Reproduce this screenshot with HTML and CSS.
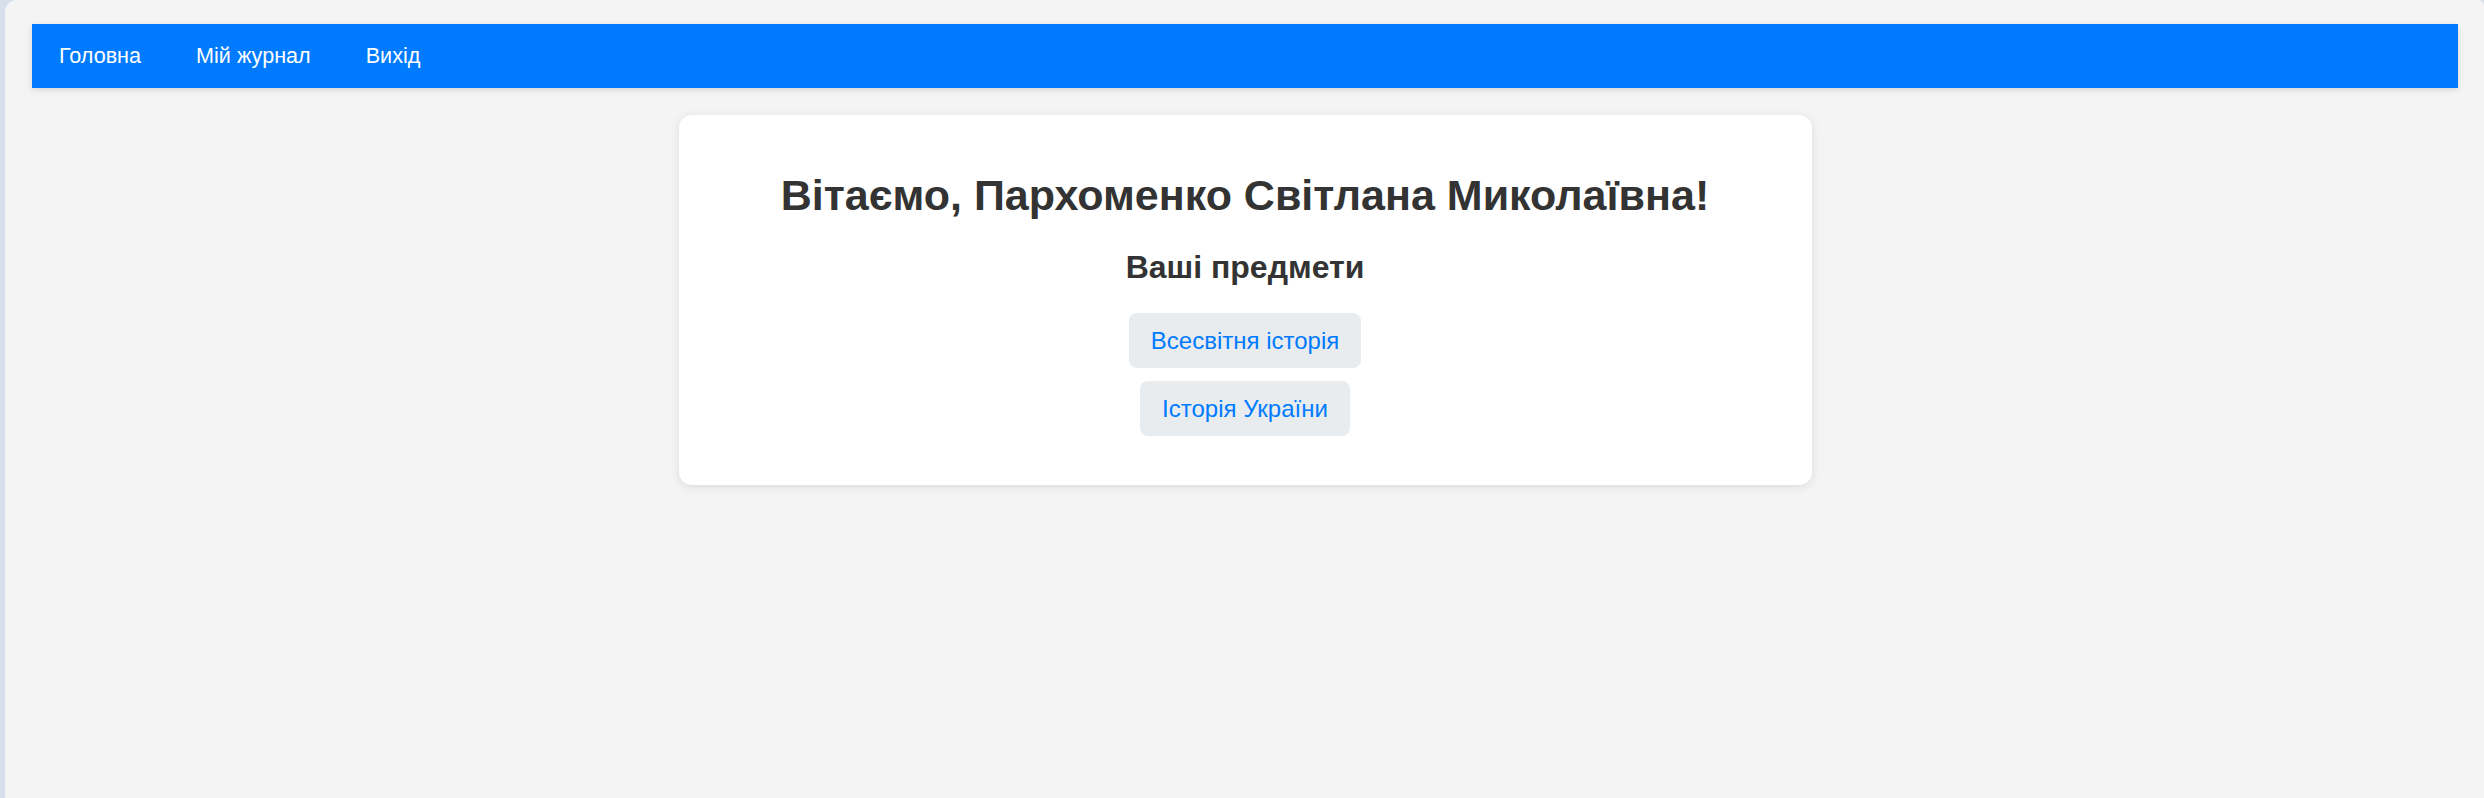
FILE: index.html
```html
<!DOCTYPE html>
<html lang="uk">
<head>
<meta charset="utf-8">
<title>Журнал</title>
<link rel="stylesheet" href="styles.css">
</head>
<body>
<div class="frame">
  <nav class="navbar">
    <a href="#" class="nav-link">Головна</a>
    <a href="#" class="nav-link">Мій журнал</a>
    <a href="#" class="nav-link">Вихід</a>
  </nav>
  <main class="card">
    <h1 class="title">Вітаємо, Пархоменко Світлана Миколаївна!</h1>
    <h2 class="subtitle">Ваші предмети</h2>
    <div class="subjects">
      <a href="#" class="subject-btn">Всесвітня історія</a>
      <a href="#" class="subject-btn">Історія України</a>
    </div>
  </main>
</div>
</body>
</html>
```

FILE: styles.css
```css
html, body {
  margin: 0;
  padding: 0;
  height: 100%;
}
body {
  background: #d5e0ea;
  font-family: "Liberation Sans", Arial, sans-serif;
  overflow: hidden;
}
.frame {
  margin-left: 5px;
  min-height: 798px;
  background: #f4f4f4;
  border-top-left-radius: 12px;
  border-top-right-radius: 6px;
  padding: 24px 26px 0 27px;
  box-sizing: border-box;
  display: flex;
  flex-direction: column;
  align-items: center;
}
.navbar {
  align-self: stretch;
  height: 64px;
  background: #007bff;
  display: flex;
  align-items: center;
  padding: 0 27px;
  gap: 55px;
  box-shadow: 0 2px 6px rgba(0, 0, 0, 0.12);
}
.nav-link {
  color: #ffffff;
  text-decoration: none;
  font-size: 21.6px;
  line-height: 26px;
}
.card {
  margin-top: 27px;
  width: 1133px;
  box-sizing: border-box;
  background: #ffffff;
  border-radius: 13px;
  box-shadow: 0 2px 10px rgba(0, 0, 0, 0.1);
  padding: 56px 20px 49px;
  text-align: center;
  color: #333333;
}
.title {
  margin: 0;
  font-size: 43px;
  line-height: 48px;
  font-weight: bold;
}
.subtitle {
  margin: 30px 0 0;
  font-size: 32px;
  line-height: 36px;
  font-weight: bold;
}
.subjects {
  margin-top: 28px;
  display: flex;
  flex-direction: column;
  align-items: center;
  gap: 13px;
}
.subject-btn {
  display: inline-block;
  background: #e9ecef;
  color: #007bff;
  text-decoration: none;
  font-size: 24px;
  line-height: 27px;
  padding: 14px 22px;
  border-radius: 8px;
}
```
